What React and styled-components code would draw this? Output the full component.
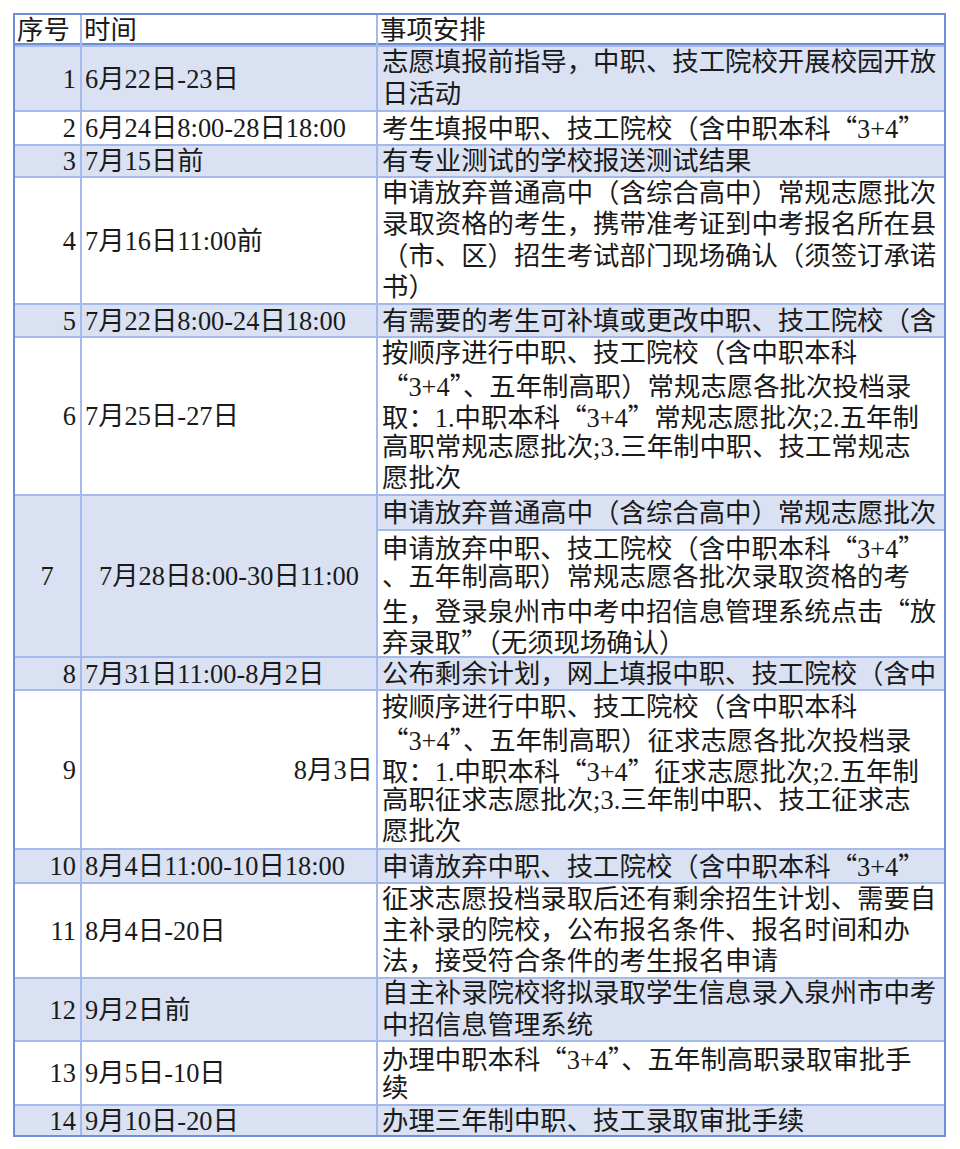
import React from 'react';
import styled, { createGlobalStyle } from 'styled-components';

const GlobalStyle = createGlobalStyle`
  html, body {
    margin: 0;
    padding: 0;
    background: #fff;
  }
`;

const rows = [
  { no: '1', time: '6月22日-23日', shade: true, h: 63, lines: ['志愿填报前指导，中职、技工院校开展校园开放', '日活动'] },
  { no: '2', time: '6月24日8:00-28日18:00', h: 32, lines: ['考生填报中职、技工院校（含中职本科“3+4”'] },
  { no: '3', time: '7月15日前', shade: true, h: 30, lines: ['有专业测试的学校报送测试结果'] },
  {
    no: '4', time: '7月16日11:00前', h: 125,
    lines: ['申请放弃普通高中（含综合高中）常规志愿批次', '录取资格的考生，携带准考证到中考报名所在县', '（市、区）招生考试部门现场确认（须签订承诺', '书）'],
  },
  { no: '5', time: '7月22日8:00-24日18:00', shade: true, h: 31, lines: ['有需要的考生可补填或更改中职、技工院校（含'] },
  {
    no: '6', time: '7月25日-27日', h: 156,
    lines: ['按顺序进行中职、技工院校（含中职本科', '“3+4”、五年制高职）常规志愿各批次投档录', '取：1.中职本科“3+4”常规志愿批次;2.五年制', '高职常规志愿批次;3.三年制中职、技工常规志', '愿批次'],
  },
  {
    no: '7', time: '7月28日8:00-30日11:00', shade: true, split: true, align: 'center', h: 33, h2: 125,
    lines: ['申请放弃普通高中（含综合高中）常规志愿批次'],
    lines2: ['申请放弃中职、技工院校（含中职本科“3+4”', '、五年制高职）常规志愿各批次录取资格的考', '生，登录泉州市中考中招信息管理系统点击“放', '弃录取”（无须现场确认）'],
  },
  { no: '8', time: '7月31日11:00-8月2日', shade: true, h: 31, lines: ['公布剩余计划，网上填报中职、技工院校（含中'] },
  {
    no: '9', time: '8月3日', timeAlign: 'right', h: 157,
    lines: ['按顺序进行中职、技工院校（含中职本科', '“3+4”、五年制高职）征求志愿各批次投档录', '取：1.中职本科“3+4”征求志愿批次;2.五年制', '高职征求志愿批次;3.三年制中职、技工征求志', '愿批次'],
  },
  { no: '10', time: '8月4日11:00-10日18:00', shade: true, h: 32, lines: ['申请放弃中职、技工院校（含中职本科“3+4”'] },
  {
    no: '11', time: '8月4日-20日', h: 93,
    lines: ['征求志愿投档录取后还有剩余招生计划、需要自', '主补录的院校，公布报名条件、报名时间和办', '法，接受符合条件的考生报名申请'],
  },
  { no: '12', time: '9月2日前', shade: true, h: 61, lines: ['自主补录院校将拟录取学生信息录入泉州市中考', '中招信息管理系统'] },
  { no: '13', time: '9月5日-10日', h: 62, lines: ['办理中职本科“3+4”、五年制高职录取审批手', '续'] },
  { no: '14', time: '9月10日-20日', shade: true, h: 29, lines: ['办理三年制中职、技工录取审批手续'] },
];

const HEAD_H = 30;

const trackHeights = [HEAD_H].concat(
  rows.flatMap((r) => (r.split ? [r.h, r.h2] : [r.h]))
);

const Page = styled.div`
  padding: 13px 14px 12px 13px;
`;

const Grid = styled.div`
  display: grid;
  width: 933px;
  box-sizing: border-box;
  grid-template-columns: 65px 294px 566px;
  grid-template-rows: ${(p) => p.$rows.map((h) => `${h}px`).join(' ')};
  gap: 2px;
  background: #a5b9ea;
  border: 2px solid #6d8fdb;
  font-family: "Liberation Serif", "Noto Sans CJK SC", serif;
  font-size: 26.4px;
  line-height: 26px;
  color: #1a1a1a;
`;

const justify = { left: 'flex-start', right: 'flex-end', center: 'center' };

const Cell = styled.div`
  display: flex;
  flex-direction: column;
  justify-content: center;
  align-items: ${(p) => justify[p.$align || 'left']};
  padding: 0 ${(p) => p.$pr || 3}px 0 ${(p) => p.$pl || 3}px;
  background: ${(p) => (p.$shade ? '#d9e1f2' : '#fff')};
  grid-row: ${(p) => (p.$span ? `span ${p.$span}` : 'auto')};
  overflow-x: clip;
  white-space: nowrap;
  min-width: 0;
`;

const HeadCell = styled(Cell)`
  box-sizing: border-box;
  border-bottom: 2px solid #6d8fdb;
  padding-left: 2px;
  padding-top: 1px;
`;

const Line = styled.div`
  height: 31.2px;
  line-height: 31.2px;
`;

const Quote = styled.span`
  font-family: "Noto Sans CJK SC", sans-serif;
`;

const fmt = (s) =>
  s.split(/([“”])/).map((part, i) =>
    part === '“' || part === '”' ? <Quote key={i}>{part}</Quote> : part
  );

const Lines = ({ lines }) =>
  lines.length === 1
    ? <span>{fmt(lines[0])}</span>
    : lines.map((l, i) => <Line key={i}>{fmt(l)}</Line>);

const App = () => (
  <>
    <GlobalStyle />
    <Page>
      <Grid $rows={trackHeights}>
        <HeadCell>序号</HeadCell>
        <HeadCell>时间</HeadCell>
        <HeadCell $pl={4}>事项安排</HeadCell>
        {rows.map((r) => (
          <React.Fragment key={r.no}>
            <Cell $align={r.align || 'right'} $pr={4} $shade={r.shade} $span={r.split ? 2 : 0}>
              {r.no}
            </Cell>
            <Cell $align={r.align || r.timeAlign} $shade={r.shade} $span={r.split ? 2 : 0}>
              {r.time}
            </Cell>
            <Cell $pl={4} $shade={r.shade}>
              <Lines lines={r.lines} />
            </Cell>
            {r.split && (
              <Cell $pl={4}>
                <Lines lines={r.lines2} />
              </Cell>
            )}
          </React.Fragment>
        ))}
      </Grid>
    </Page>
  </>
);

export default App;
